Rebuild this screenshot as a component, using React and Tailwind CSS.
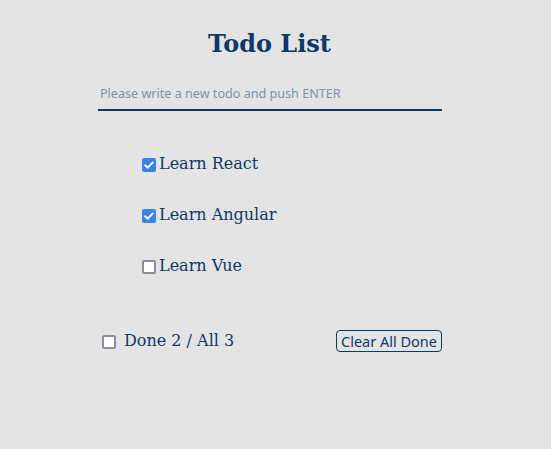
import React, { useState } from "react";

const initialTodos = [
  { id: 1, text: "Learn React", done: true },
  { id: 2, text: "Learn Angular", done: true },
  { id: 3, text: "Learn Vue", done: false },
];

const serif = "font-['DejaVu_Serif',serif]";
const sans = "font-['Noto_Sans',sans-serif]";

const Check = ({ checked, onChange, className = "" }) => (
  <button
    type="button"
    onClick={onChange}
    className={`flex h-[14px] w-[14px] shrink-0 items-center justify-center rounded-[2px] ${
      checked ? "bg-[#3b82e6]" : "border-2 border-[#8e8e98] bg-white"
    } ${className}`}
  >
    {checked && (
      <svg viewBox="0 0 14 14" className="h-[14px] w-[14px]">
        <path
          d="M3.2 7.2 L5.8 9.7 L10.8 4.4"
          fill="none"
          stroke="white"
          strokeWidth="1.9"
          strokeLinecap="round"
          strokeLinejoin="round"
        />
      </svg>
    )}
  </button>
);

export default function App() {
  const [todos, setTodos] = useState(initialTodos);
  const [draft, setDraft] = useState("");
  const [allDone, setAllDone] = useState(false);

  const doneCount = todos.filter((t) => t.done).length;

  const toggle = (id) =>
    setTodos(todos.map((t) => (t.id === id ? { ...t, done: !t.done } : t)));

  return (
    <div className={`min-h-[449px] w-full bg-[#e4e4e4] text-[#0b3a66] ${serif}`}>
      <div className="ml-[98px] w-[344px] pt-[28px]">
        <h1 className="text-center text-[24px] font-bold leading-[32px] pr-[1px]">
          Todo List
        </h1>

        <input
          value={draft}
          onChange={(e) => setDraft(e.target.value)}
          placeholder="Please write a new todo and push ENTER"
          className={`mt-[24px] block w-full border-b-2 border-[#0b3a66] bg-transparent px-[2px] pb-[5px] text-[12.6px] leading-[20px] outline-none placeholder:text-[#7e93a8] ${sans}`}
        />

        <ul className="mt-[43px] flex flex-col gap-[31px] pl-[44px]">
          {todos.map((todo) => (
            <li key={todo.id} className="flex h-[20px] items-center">
              <Check
                checked={todo.done}
                onChange={() => toggle(todo.id)}
                className="mr-[3px] mt-[1px]"
              />
              <span className="text-[16px] leading-[20px]">{todo.text}</span>
            </li>
          ))}
        </ul>

        <div className="mt-[53px] flex items-center justify-between">
          <div className="flex items-center">
            <Check
              checked={allDone}
              onChange={() => setAllDone(!allDone)}
              className="ml-[4px] mr-[8px] mt-[2px]"
            />
            <span className="text-[16px] leading-[20px]">
              Done {doneCount} / All {todos.length}
            </span>
          </div>
          <button
            type="button"
            onClick={() => setTodos(todos.filter((t) => !t.done))}
            className={`mt-[1px] h-[22px] rounded-[4px] border border-[#0b3a66] px-[4px] text-[14.5px] leading-[20px] ${sans}`}
          >
            Clear All Done
          </button>
        </div>
      </div>
    </div>
  );
}
